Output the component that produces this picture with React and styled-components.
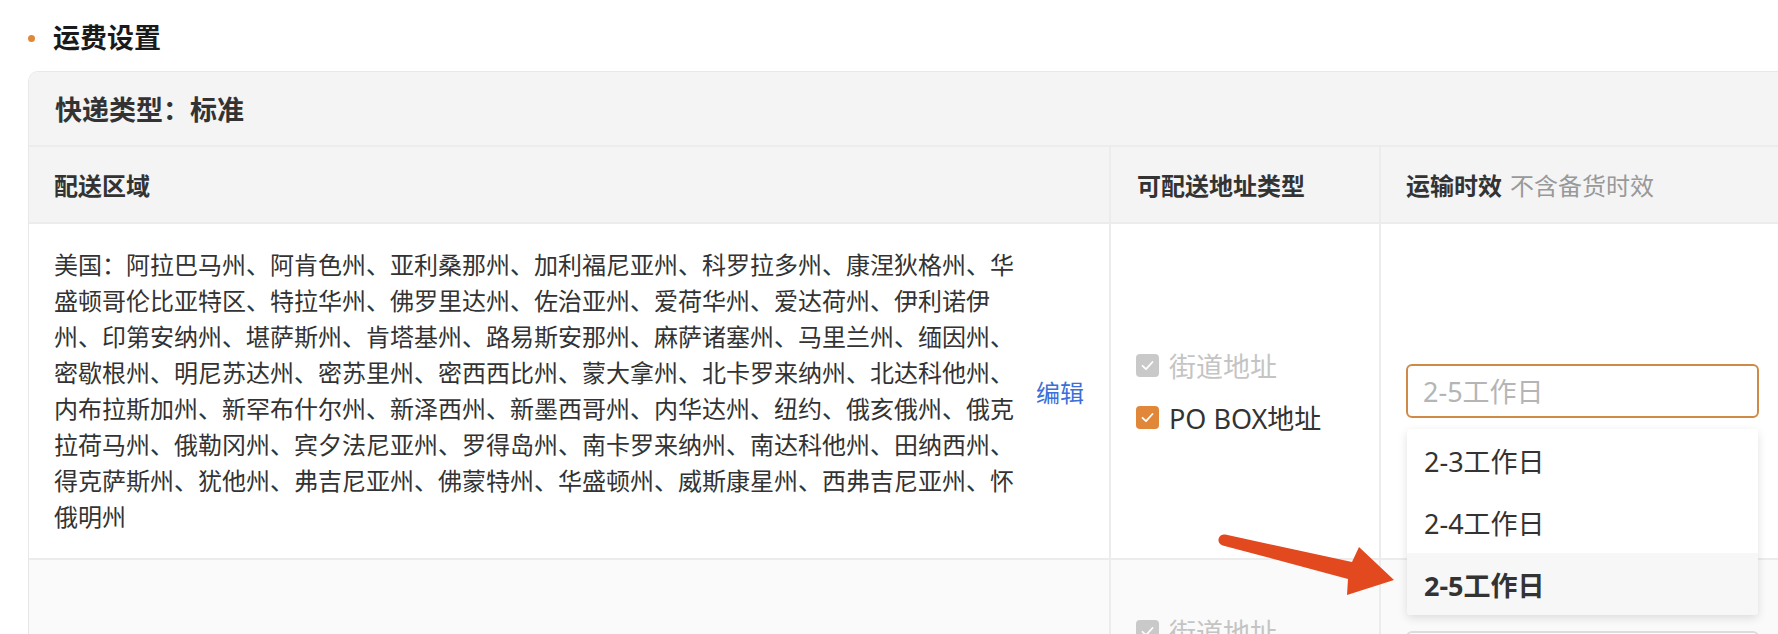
import styled, { createGlobalStyle } from "styled-components";

const GlobalStyle = createGlobalStyle`
  html, body {
    margin: 0;
    padding: 0;
    background: #fff;
  }
  body {
    font-family: "Noto Sans", "Noto Sans CJK SC", sans-serif;
    color: #333;
    overflow: hidden;
  }
`;

const regions =
  "美国：阿拉巴马州、阿肯色州、亚利桑那州、加利福尼亚州、科罗拉多州、康涅狄格州、华盛顿哥伦比亚特区、特拉华州、佛罗里达州、佐治亚州、爱荷华州、爱达荷州、伊利诺伊州、印第安纳州、堪萨斯州、肯塔基州、路易斯安那州、麻萨诸塞州、马里兰州、缅因州、密歇根州、明尼苏达州、密苏里州、密西西比州、蒙大拿州、北卡罗来纳州、北达科他州、内布拉斯加州、新罕布什尔州、新泽西州、新墨西哥州、内华达州、纽约、俄亥俄州、俄克拉荷马州、俄勒冈州、宾夕法尼亚州、罗得岛州、南卡罗来纳州、南达科他州、田纳西州、得克萨斯州、犹他州、弗吉尼亚州、佛蒙特州、华盛顿州、威斯康星州、西弗吉尼亚州、怀俄明州";

const options = ["2-3工作日", "2-4工作日", "2-5工作日"];

const Page = styled.div`
  position: relative;
  width: 1778px;
  height: 634px;
  overflow: hidden;
  padding: 18px 0 0 28px;
  box-sizing: border-box;
`;

const SectionTitle = styled.h2`
  display: flex;
  align-items: center;
  gap: 18px;
  height: 40px;
  margin: 0 0 13px;
  font-size: 27px;
  line-height: 40px;
  font-weight: 700;
  color: #1a1a1a;

  &::before {
    content: "";
    width: 7px;
    height: 7px;
    border-radius: 50%;
    background: #e08838;
  }
`;

const Card = styled.div`
  width: 1800px;
  border: 1px solid #e8e8e8;
  border-bottom: none;
  border-radius: 10px 10px 0 0;
  overflow: hidden;
`;

const CardHeader = styled.div`
  display: flex;
  align-items: center;
  height: 73px;
  padding-left: 26px;
  background: #f4f4f4;
  border-bottom: 2px solid #ececec;
  font-size: 27px;
  font-weight: 600;
  color: #333;
`;

const Row = styled.div`
  display: grid;
  grid-template-columns: 1082px 270px 1fr;
  min-height: ${(p) => p.$minHeight || 0}px;
  background: ${(p) => p.$bg || "#fff"};
  border-bottom: 2px solid #ececec;
`;

const HeadCell = styled.div`
  display: flex;
  align-items: center;
  gap: 8px;
  height: 75px;
  padding-left: ${(p) => p.$pad || 25}px;
  box-sizing: border-box;
  border-right: ${(p) => (p.$last ? "none" : "2px solid #ececec")};
  font-size: 24px;
  font-weight: 700;
  color: #333;
`;

const Hint = styled.span`
  font-weight: 400;
  color: #999;
`;

const RegionCell = styled.div`
  display: flex;
  align-items: center;
  justify-content: space-between;
  padding: 23px 25px;
  box-sizing: border-box;
  border-right: 2px solid #ececec;
`;

const RegionText = styled.p`
  width: 964px;
  margin: 0;
  font-size: 24px;
  line-height: 36px;
  color: #333;
`;

const EditLink = styled.a`
  flex-shrink: 0;
  font-size: 24px;
  color: #3c6fd9;
  cursor: pointer;
`;

const TypeCell = styled.div`
  display: flex;
  flex-direction: column;
  justify-content: center;
  gap: 16px;
  padding-left: 25px;
  border-right: 2px solid #ececec;
`;

const CheckItem = styled.label`
  display: flex;
  align-items: center;
  gap: 10px;
  height: 36px;
  font-size: 27px;
  color: ${(p) => (p.$disabled ? "#c4c4c4" : "#333")};
`;

const Box = styled.span`
  display: flex;
  align-items: center;
  justify-content: center;
  width: 23px;
  height: 23px;
  border-radius: 4px;
  background: ${(p) => (p.$disabled ? "#c9c9c9" : "#e0873a")};
`;

const TimeCell = styled.div`
  display: flex;
  align-items: center;
  padding-left: 25px;
`;

const SelectWrap = styled.div`
  position: relative;
  width: 353px;
`;

const Input = styled.input`
  width: 100%;
  height: 54px;
  box-sizing: border-box;
  padding: 0 15px;
  border: 2px solid ${(p) => (p.$focused ? "#cf8a47" : "#dcdcdc")};
  border-radius: 6px;
  background: #fff;
  outline: none;
  font-family: inherit;
  font-size: 27px;
  color: #333;

  &::placeholder {
    color: #b5b5b5;
  }
`;

const Menu = styled.ul`
  position: absolute;
  top: 65px;
  left: 1px;
  z-index: 2;
  width: 351px;
  margin: 0;
  padding: 0;
  list-style: none;
  background: #fff;
  border-radius: 4px;
  box-shadow: 0 3px 10px rgba(0, 0, 0, 0.12);
  overflow: hidden;
`;

const MenuItem = styled.li`
  display: flex;
  align-items: center;
  height: 62px;
  padding-left: 17px;
  font-size: 27px;
  font-weight: ${(p) => (p.$active ? 700 : 400)};
  color: #333;
  background: ${(p) => (p.$active ? "#f7f7f7" : "#fff")};
`;

const Arrow = styled.svg`
  position: absolute;
  left: 1210px;
  top: 530px;
  z-index: 3;
`;

const Check = () => (
  <svg width="23" height="23" viewBox="0 0 23 23">
    <path d="M6.5 11.8 L10 15.2 L16.5 8" fill="none" stroke="#fff" strokeWidth="1.8" strokeLinecap="round" strokeLinejoin="round" />
  </svg>
);

const AddressTypes = () => (
  <>
    <CheckItem $disabled>
      <Box $disabled>
        <Check />
      </Box>
      街道地址
    </CheckItem>
    <CheckItem>
      <Box>
        <Check />
      </Box>
      PO BOX地址
    </CheckItem>
  </>
);

export default function App() {
  return (
    <Page>
      <GlobalStyle />
      <SectionTitle>运费设置</SectionTitle>
      <Card>
        <CardHeader>快递类型：标准</CardHeader>
        <Row $bg="#f4f4f4">
          <HeadCell>配送区域</HeadCell>
          <HeadCell $pad={26}>可配送地址类型</HeadCell>
          <HeadCell $last>
            运输时效<Hint>不含备货时效</Hint>
          </HeadCell>
        </Row>
        <Row>
          <RegionCell>
            <RegionText>{regions}</RegionText>
            <EditLink>编辑</EditLink>
          </RegionCell>
          <TypeCell>
            <AddressTypes />
          </TypeCell>
          <TimeCell>
            <SelectWrap>
              <Input $focused placeholder="2-5工作日" />
              <Menu>
                {options.map((o, i) => (
                  <MenuItem key={o} $active={i === options.length - 1}>
                    {o}
                  </MenuItem>
                ))}
              </Menu>
            </SelectWrap>
          </TimeCell>
        </Row>
        <Row $bg="#fafafa" $minHeight={195}>
          <RegionCell />
          <TypeCell>
            <AddressTypes />
          </TypeCell>
          <TimeCell>
            <SelectWrap>
              <Input placeholder="2-5工作日" />
            </SelectWrap>
          </TimeCell>
        </Row>
      </Card>
      <Arrow width="195" height="75" viewBox="0 0 195 75">
        <path
          d="M15.3 4.6 L142 32 L149 17 L184 50 L137 65 L138 49 L12.7 15.4 A5.5 5.5 0 0 1 15.3 4.6 Z"
          fill="#e2491f"
        />
      </Arrow>
    </Page>
  );
}
